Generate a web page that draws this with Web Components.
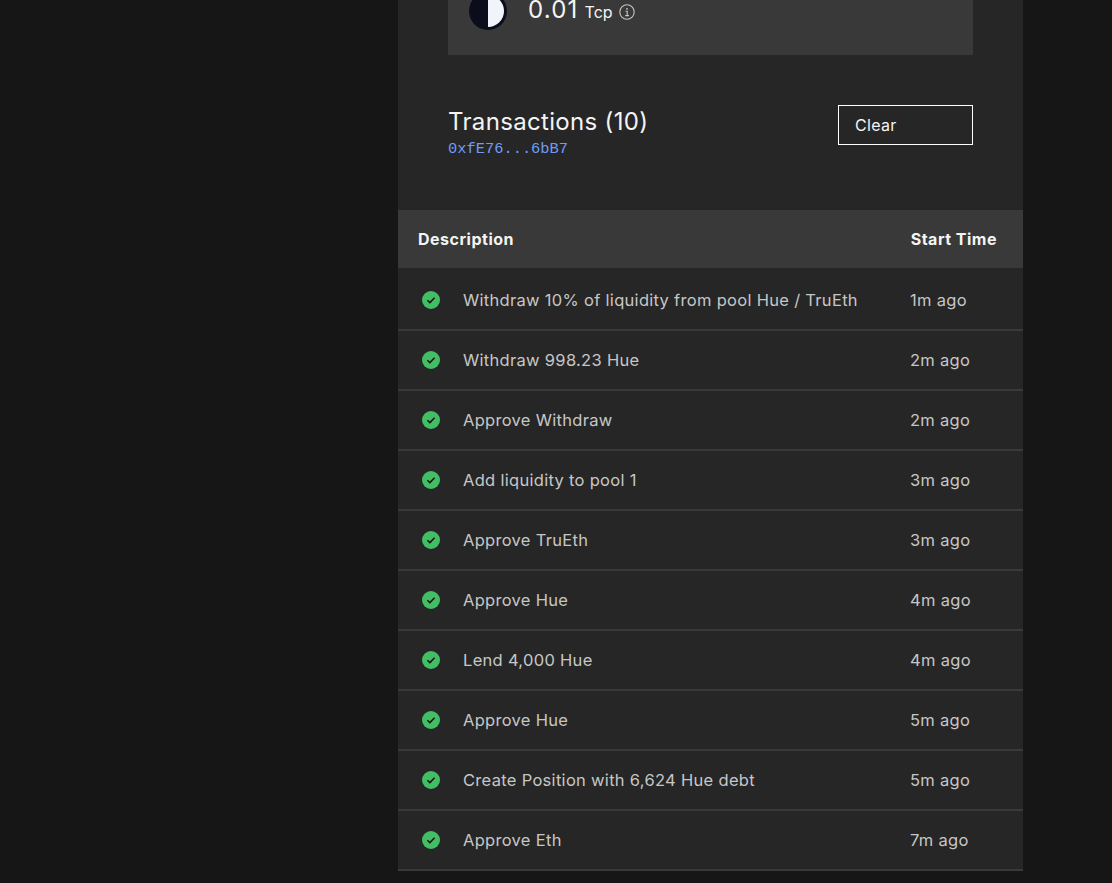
<!DOCTYPE html>
<html>
<head>
<meta charset="utf-8">
<title>Transactions</title>
<style>
  html, body {
    margin: 0;
    height: 100%;
    overflow: hidden;
    background: #161616;
  }
  body {
    font-family: "Inter", "Liberation Sans", sans-serif;
  }
</style>
</head>
<body>
<tx-page>
  <balance-card amount="0.01" unit="Tcp"></balance-card>
  <tx-header title="Transactions (10)" address="0xfE76...6bB7"></tx-header>
  <tx-table>
    <tx-row time="1m ago">Withdraw 10% of liquidity from pool Hue / TruEth</tx-row>
    <tx-row time="2m ago">Withdraw 998.23 Hue</tx-row>
    <tx-row time="2m ago">Approve Withdraw</tx-row>
    <tx-row time="3m ago">Add liquidity to pool 1</tx-row>
    <tx-row time="3m ago">Approve TruEth</tx-row>
    <tx-row time="4m ago">Approve Hue</tx-row>
    <tx-row time="4m ago">Lend 4,000 Hue</tx-row>
    <tx-row time="5m ago">Approve Hue</tx-row>
    <tx-row time="5m ago">Create Position with 6,624 Hue debt</tx-row>
    <tx-row time="7m ago">Approve Eth</tx-row>
  </tx-table>
</tx-page>

<script>
class TxPage extends HTMLElement {
  constructor() {
    super();
    this._root = this.attachShadow({ mode: 'open' });
  }

  connectedCallback() {
    this._root.innerHTML = `
      <style>
        :host {
          display: block;
          width: 625px;
          margin-left: 398px;
          background: #262626;
          color: #f4f4f4;
        }
      </style>
      <slot></slot>
    `;
  }
}

class BalanceCard extends HTMLElement {
  constructor() {
    super();
    this._root = this.attachShadow({ mode: 'open' });
  }

  connectedCallback() {
    this._root.innerHTML = `
      <style>
        :host {
          display: block;
          margin: 0 50px;
          height: 55px;
          background: #393939;
          overflow: hidden;
        }
        .inner {
          display: flex;
          align-items: flex-start;
          gap: 21px;
          padding-left: 21px;
        }
        .coin { flex: none; margin-top: -8px; }
        .amount {
          display: flex;
          align-items: baseline;
          font-size: 24px;
          line-height: 20px;
        }
        .value { letter-spacing: 1.2px; }
        .unit {
          font-size: 16px;
          margin-left: 6px;
        }
        .info {
          align-self: center;
          margin-left: 6px;
          position: relative;
          top: 1px;
        }
      </style>
      <div class="inner">
        <svg class="coin" width="38" height="38" viewBox="0 0 38 38">
          <circle cx="19" cy="19" r="19" fill="#0b0d1c"/>
          <path d="M19 3a16 16 0 0 1 0 32z" fill="#f2f4fb"/>
        </svg>
        <div class="amount">
          <span class="value">${this.getAttribute('amount')}</span>
          <span class="unit">${this.getAttribute('unit')}</span>
          <svg class="info" width="16" height="16" viewBox="0 0 16 16" fill="none" stroke="#c6c6c6">
            <circle cx="8" cy="8" r="7.2" stroke-width="1.1"/>
            <path d="M6.6 7.2H8.2V11.6M6.2 11.6H10" stroke-width="1.1"/>
            <circle cx="8" cy="4.8" r="0.9" fill="#c6c6c6" stroke="none"/>
          </svg>
        </div>
      </div>
    `;
  }
}

class TxHeader extends HTMLElement {
  constructor() {
    super();
    this._root = this.attachShadow({ mode: 'open' });
  }

  connectedCallback() {
    this._root.innerHTML = `
      <style>
        :host {
          display: flex;
          justify-content: space-between;
          align-items: flex-start;
          height: 155px;
          padding: 50px 50px 0;
          box-sizing: border-box;
        }
        h2 {
          margin: 0;
          font-size: 24px;
          font-weight: 400;
          letter-spacing: 0.33px;
          line-height: 33px;
        }
        .address {
          display: block;
          margin-top: 1px;
          color: #6f9bf5;
          font-family: "Liberation Mono", monospace;
          font-size: 15.4px;
          line-height: 20px;
        }
        button {
          width: 135px;
          height: 40px;
          padding: 0 16px;
          box-sizing: border-box;
          background: transparent;
          border: 1px solid #fff;
          color: #f4f4f4;
          font: inherit;
          font-size: 16px;
          letter-spacing: 0.3px;
          text-align: left;
        }
      </style>
      <div>
        <h2>${this.getAttribute('title')}</h2>
        <span class="address">${this.getAttribute('address')}</span>
      </div>
      <button>Clear</button>
    `;
  }
}

class TxTable extends HTMLElement {
  constructor() {
    super();
    this._root = this.attachShadow({ mode: 'open' });
  }

  connectedCallback() {
    this._root.innerHTML = `
      <style>
        :host { display: block; }
        .head {
          display: flex;
          align-items: center;
          justify-content: space-between;
          height: 58px;
          padding: 0 26px 0 20px;
          background: #393939;
          font-size: 16px;
          font-weight: 700;
          letter-spacing: 0.5px;
          color: #f4f4f4;
        }
        .rows { padding-top: 3px; }
      </style>
      <div class="head"><span>Description</span><span>Start Time</span></div>
      <div class="rows"><slot></slot></div>
    `;
  }
}

class TxRow extends HTMLElement {
  constructor() {
    super();
    this._root = this.attachShadow({ mode: 'open' });
  }

  connectedCallback() {
    this._root.innerHTML = `
      <style>
        :host {
          display: grid;
          grid-template-columns: 65px 1fr 113px;
          align-items: center;
          height: 60px;
          box-sizing: border-box;
          border-bottom: 2px solid #393939;
          color: #c6c6c6;
          font-size: 16.5px;
          letter-spacing: 0.3px;
        }
        svg { margin-left: 24px; display: block; }
      </style>
      <svg width="18" height="18" viewBox="0 0 18 18">
        <circle cx="9" cy="9" r="9" fill="#42be65"/>
        <path d="M5.4 9.2L7.9 11.6L12.6 6.8" fill="none" stroke="#161616" stroke-width="1.5"/>
      </svg>
      <span><slot></slot></span>
      <span>${this.getAttribute('time')}</span>
    `;
  }
}

customElements.define('tx-page', TxPage);
customElements.define('balance-card', BalanceCard);
customElements.define('tx-header', TxHeader);
customElements.define('tx-table', TxTable);
customElements.define('tx-row', TxRow);
</script>
</body>
</html>
